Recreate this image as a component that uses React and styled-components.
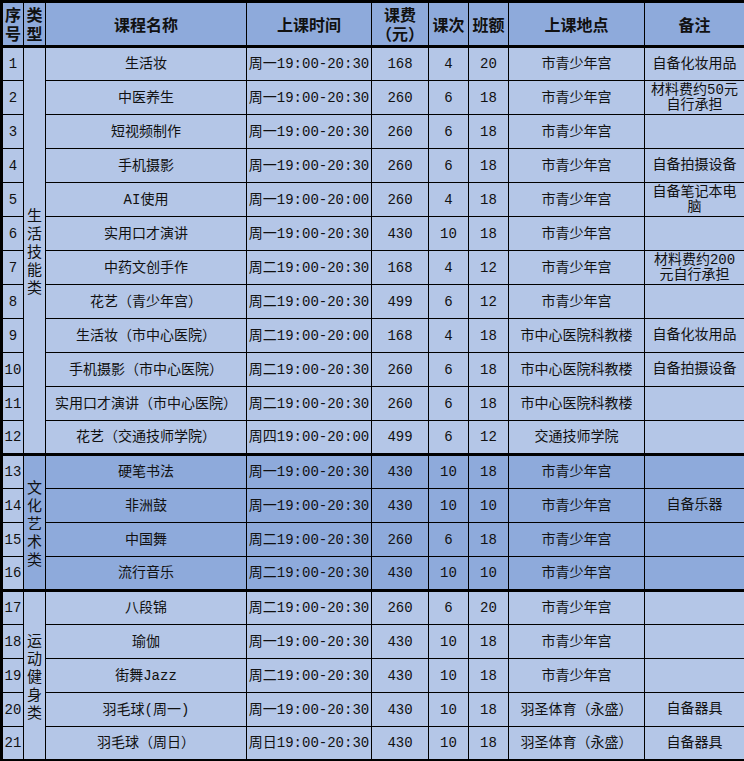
import React from 'react'
import styled, { createGlobalStyle } from 'styled-components'

const GlobalStyle = createGlobalStyle`
  html, body {
    margin: 0;
    padding: 0;
    background: #ffffff;
  }
`

const LIGHT = '#b4c6e7'
const DARK = '#8eaadb'

const Table = styled.table`
  width: 744px;
  table-layout: fixed;
  border-collapse: collapse;
  border: 3px solid #000;
  font-family: "Liberation Mono", "Noto Sans CJK SC", monospace;
  font-size: 14px;
  color: #111;
`

const HeadRow = styled.tr`
  height: 45px;
`

const HeadCell = styled.th`
  background: ${DARK};
  border: 1px solid #000;
  border-bottom: 3px solid #000;
  padding: 0;
  font-family: "Noto Sans CJK SC", sans-serif;
  font-size: 16px;
  font-weight: 700;
  line-height: 20px;
  text-align: center;
  vertical-align: middle;
`

const HeadLine = styled.div`
  height: 19px;
  line-height: 19px;
  overflow: visible;
`

const Row = styled.tr`
  height: 34px;
`

const Cell = styled.td`
  background: ${({ $dark }) => ($dark ? DARK : LIGHT)};
  border: 1px solid #000;
  border-top: ${({ $thick }) => ($thick ? '3px' : '1px')} solid #000;
  padding: 0;
  text-align: center;
  vertical-align: middle;
  white-space: nowrap;
  line-height: 16px;
`

const TypeText = styled.div`
  width: 1em;
  margin: 0 auto;
  font-family: "Noto Sans CJK SC", sans-serif;
  font-size: 15px;
  line-height: 18px;
  word-break: break-all;
  white-space: normal;
`

const Note = styled.div`
  line-height: 15px;
`

const groups = [
  { type: '生活技能类', dark: false, from: 1, count: 12 },
  { type: '文化艺术类', dark: true, from: 13, count: 4 },
  { type: '运动健身类', dark: false, from: 17, count: 5 },
]

const rows = [
  ['生活妆', '周一19:00-20:30', '168', '4', '20', '市青少年宫', ['自备化妆用品']],
  ['中医养生', '周一19:00-20:30', '260', '6', '18', '市青少年宫', ['材料费约50元', '自行承担']],
  ['短视频制作', '周一19:00-20:30', '260', '6', '18', '市青少年宫', []],
  ['手机摄影', '周一19:00-20:30', '260', '6', '18', '市青少年宫', ['自备拍摄设备']],
  ['AI使用', '周一19:00-20:00', '260', '4', '18', '市青少年宫', ['自备笔记本电', '脑']],
  ['实用口才演讲', '周一19:00-20:30', '430', '10', '18', '市青少年宫', []],
  ['中药文创手作', '周二19:00-20:30', '168', '4', '12', '市青少年宫', ['材料费约200', '元自行承担']],
  ['花艺（青少年宫）', '周二19:00-20:30', '499', '6', '12', '市青少年宫', []],
  ['生活妆（市中心医院）', '周二19:00-20:00', '168', '4', '18', '市中心医院科教楼', ['自备化妆用品']],
  ['手机摄影（市中心医院）', '周二19:00-20:30', '260', '6', '18', '市中心医院科教楼', ['自备拍摄设备']],
  ['实用口才演讲（市中心医院）', '周二19:00-20:30', '260', '6', '18', '市中心医院科教楼', []],
  ['花艺（交通技师学院）', '周四19:00-20:00', '499', '6', '12', '交通技师学院', []],
  ['硬笔书法', '周一19:00-20:30', '430', '10', '18', '市青少年宫', []],
  ['非洲鼓', '周一19:00-20:30', '430', '10', '10', '市青少年宫', ['自备乐器']],
  ['中国舞', '周二19:00-20:30', '260', '6', '18', '市青少年宫', []],
  ['流行音乐', '周二19:00-20:30', '430', '10', '10', '市青少年宫', []],
  ['八段锦', '周二19:00-20:30', '260', '6', '20', '市青少年宫', []],
  ['瑜伽', '周一19:00-20:30', '430', '10', '18', '市青少年宫', []],
  ['街舞Jazz', '周二19:00-20:30', '430', '10', '18', '市青少年宫', []],
  ['羽毛球(周一)', '周一19:00-20:30', '430', '10', '18', '羽圣体育（永盛）', ['自备器具']],
  ['羽毛球（周日）', '周日19:00-20:30', '430', '10', '18', '羽圣体育（永盛）', ['自备器具']],
]

const widths = [22, 22, 201, 125, 57, 40, 40, 136, 101]

export default function App() {
  return (
    <>
      <GlobalStyle />
      <Table>
        <colgroup>
          {widths.map((w, i) => (
            <col key={i} style={{ width: w }} />
          ))}
        </colgroup>
        <thead>
          <HeadRow>
            <HeadCell><HeadLine>序</HeadLine><HeadLine>号</HeadLine></HeadCell>
            <HeadCell><HeadLine>类</HeadLine><HeadLine>型</HeadLine></HeadCell>
            <HeadCell>课程名称</HeadCell>
            <HeadCell>上课时间</HeadCell>
            <HeadCell><HeadLine>课费</HeadLine><HeadLine>（元）</HeadLine></HeadCell>
            <HeadCell>课次</HeadCell>
            <HeadCell>班额</HeadCell>
            <HeadCell>上课地点</HeadCell>
            <HeadCell>备注</HeadCell>
          </HeadRow>
        </thead>
        <tbody>
          {rows.map((r, i) => {
            const no = i + 1
            const group = groups.find((g) => no >= g.from && no < g.from + g.count)
            const first = no === group.from
            const thick = first && no !== 1
            const dark = group.dark
            return (
              <Row key={no}>
                <Cell $thick={thick}>{no}</Cell>
                {first && (
                  <Cell $thick={thick} $dark={dark} rowSpan={group.count}>
                    <TypeText>{group.type}</TypeText>
                  </Cell>
                )}
                <Cell $thick={thick} $dark={dark}>{r[0]}</Cell>
                <Cell $thick={thick} $dark={dark}>{r[1]}</Cell>
                <Cell $thick={thick} $dark={dark}>{r[2]}</Cell>
                <Cell $thick={thick} $dark={dark}>{r[3]}</Cell>
                <Cell $thick={thick} $dark={dark}>{r[4]}</Cell>
                <Cell $thick={thick} $dark={dark}>{r[5]}</Cell>
                <Cell $thick={thick} $dark={dark}>
                  {r[6].map((line, k) => (
                    <Note key={k}>{line}</Note>
                  ))}
                </Cell>
              </Row>
            )
          })}
        </tbody>
      </Table>
    </>
  )
}
